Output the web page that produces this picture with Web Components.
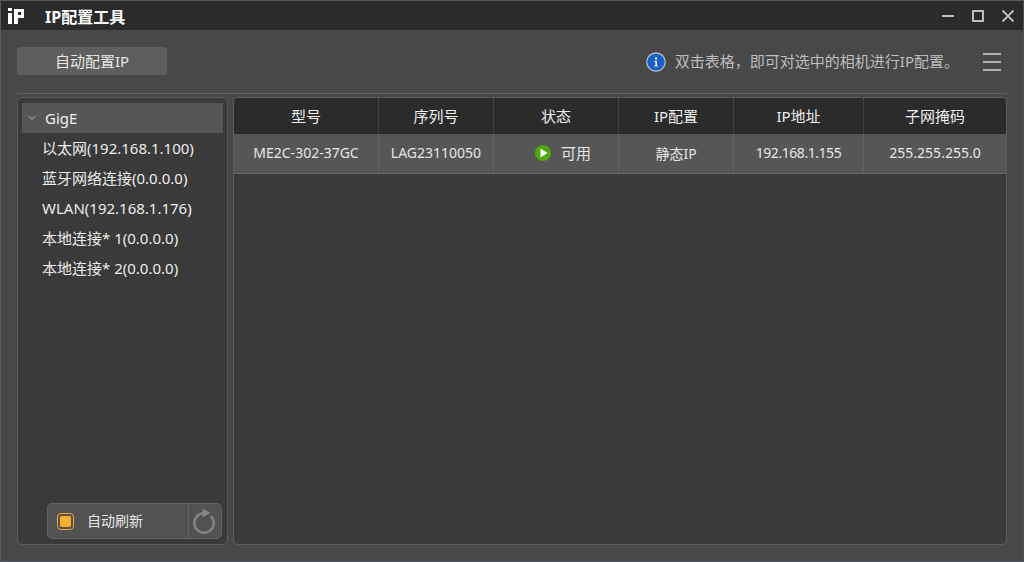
<!DOCTYPE html>
<html>
<head>
<meta charset="utf-8">
<title>IP配置工具</title>
<style>
  html, body { margin: 0; height: 100%; background: #484848; }
  body { font-family: "Noto Sans", "Noto Sans CJK SC", sans-serif; font-size: 15px; color: #e6e6e6; overflow: hidden; }
</style>
</head>
<body>
<ip-window>
  <ip-titlebar slot="title">IP配置工具</ip-titlebar>
  <ip-toolbar slot="toolbar"></ip-toolbar>
  <ip-tree slot="left"></ip-tree>
  <ip-table slot="right"></ip-table>
</ip-window>

<script>
class IpWindow extends HTMLElement {
  connectedCallback() {
    this.attachShadow({ mode: "open" });
    this.shadowRoot.innerHTML = `
      <style>
        :host { display: flex; flex-direction: column; box-sizing: border-box; width: 1024px; height: 562px; border: 1px solid #565a62; border-right-color: #4c4e52; background: #484848; }
        .body { flex: 1; display: flex; flex-direction: column; padding: 0 16px 16px; min-height: 0; }
        .rule { height: 1px; background: #5d616b; flex: none; }
        .panes { flex: 1; display: flex; gap: 5px; margin-top: 3px; min-height: 0; }
      </style>
      <slot name="title"></slot>
      <div class="body">
        <slot name="toolbar"></slot>
        <div class="rule"></div>
        <div class="panes">
          <slot name="left"></slot>
          <slot name="right"></slot>
        </div>
      </div>
    `;
  }
}

class IpTitlebar extends HTMLElement {
  connectedCallback() {
    this.attachShadow({ mode: "open" });
    this.shadowRoot.innerHTML = `
      <style>
        :host { display: flex; align-items: center; flex: none; height: 29px; background: #2b2b2b; color: #fff; font-weight: 700; font-size: 16px; }
        .logo { width: 18px; height: 16px; margin: 0 0 0 6px; flex: none; }
        .name { margin-left: 20px; flex: 1; }
        .btns { display: flex; gap: 14px; margin-right: 7px; }
        svg.b { width: 16px; height: 16px; display: block; }
      </style>
      <svg class="logo" viewBox="0 0 18 16">
        <rect x="1" y="0" width="4" height="3" fill="#fff"/>
        <rect x="1" y="5" width="4" height="11" fill="#fff"/>
        <path d="M7 1h10v9h-6v6H7z M11 4v3h3V4z" fill="#fff" fill-rule="evenodd"/>
      </svg>
      <span class="name"><slot></slot></span>
      <div class="btns">
        <svg class="b" viewBox="0 0 16 16"><path d="M2 8h12" stroke="#bdbdbd" stroke-width="2"/></svg>
        <svg class="b" viewBox="0 0 16 16"><rect x="3" y="3" width="10" height="10" fill="none" stroke="#bdbdbd" stroke-width="2"/></svg>
        <svg class="b" viewBox="0 0 16 16"><path d="M2.5 2.5l11 11M13.5 2.5l-11 11" stroke="#bdbdbd" stroke-width="1.8"/></svg>
      </div>
    `;
  }
}

class IpToolbar extends HTMLElement {
  connectedCallback() {
    this.attachShadow({ mode: "open" });
    this.shadowRoot.innerHTML = `
      <style>
        :host { display: flex; align-items: center; flex: none; height: 63px; box-sizing: border-box; }
        button { all: unset; box-sizing: border-box; width: 150px; height: 28px; margin-bottom: 1px; border-radius: 4px; background: #5e5e5e; color: #e6e6e6; text-align: center; font: 15px/28px "Noto Sans", "Noto Sans CJK SC", sans-serif; }
        .tip { margin-left: auto; display: flex; align-items: center; color: #bdbdbd; font-size: 15px; }
        .tip span { margin-top: -2px; }
        .info { width: 20px; height: 20px; margin-right: 9px; flex: none; }
        .menu { width: 20px; height: 20px; margin: 0 5px 0 23px; flex: none; }
      </style>
      <button>自动配置IP</button>
      <div class="tip">
        <svg class="info" viewBox="0 0 20 20">
          <circle cx="10" cy="10" r="9.2" fill="#1a5fc8" stroke="#b9c0cc" stroke-width="1.2"/>
          <rect x="9" y="5.5" width="2" height="2" fill="#fff"/>
          <path d="M8.4 9h2.6v4.4h1v1H8.4v-1h1V10h-1z" fill="#fff"/>
        </svg>
        <span>双击表格，即可对选中的相机进行IP配置。</span>
        <svg class="menu" viewBox="0 0 20 20"><path d="M1 2h18M1 10h18M1 18h18" stroke="#b4b4b4" stroke-width="2"/></svg>
      </div>
    `;
  }
}

class IpTree extends HTMLElement {
  connectedCallback() {
    const items = ["以太网(192.168.1.100)", "蓝牙网络连接(0.0.0.0)", "WLAN(192.168.1.176)", "本地连接* 1(0.0.0.0)", "本地连接* 2(0.0.0.0)"];
    this.attachShadow({ mode: "open" });
    this.shadowRoot.innerHTML = `
      <style>
        :host { display: flex; flex-direction: column; box-sizing: border-box; width: 211px; flex: none; padding: 5px 4px 5px 4px; background: #3a3a3a; border: 1px solid #585c64; border-radius: 5px; }
        .root { display: flex; align-items: center; height: 30px; background: #565656; color: #eee; font-size: 15px; }
        .root svg { width: 8px; height: 6px; margin: 0 9px 0 6px; }
        .item { height: 30px; line-height: 30px; padding-left: 20px; color: #ececec; white-space: nowrap; }
        ip-refresh { margin-top: auto; }
      </style>
      <div class="root">
        <svg viewBox="0 0 8 6"><path d="M1 1.2l3 3 3-3" fill="none" stroke="#9a9a9a" stroke-width="1.2"/></svg>
        GigE
      </div>
      ${items.map(t => `<div class="item">${t}</div>`).join("")}
      <ip-refresh></ip-refresh>
    `;
  }
}

class IpRefresh extends HTMLElement {
  connectedCallback() {
    this.attachShadow({ mode: "open" });
    this.shadowRoot.innerHTML = `
      <style>
        :host { display: flex; align-self: flex-end; box-sizing: border-box; width: 175px; height: 36px; margin-right: 1px; background: #525252; border: 1px solid #5f6269; border-radius: 5px; }
        .check { display: flex; align-items: center; flex: 1; padding-left: 9px; font-size: 14px; color: #e6e6e6; }
        .check span { margin-top: -2px; }
        .box { box-sizing: border-box; width: 17px; height: 17px; border: 1px solid #f0a92e; border-radius: 4px; padding: 2px; margin-right: 13px; }
        .box i { display: block; width: 100%; height: 100%; background: #fbb02c; border-radius: 2px; }
        .spin { width: 32px; border-left: 1px solid #626262; display: flex; align-items: center; justify-content: center; }
        .spin svg { width: 24px; height: 26px; }
      </style>
      <div class="check"><div class="box"><i></i></div><span>自动刷新</span></div>
      <div class="spin">
        <svg viewBox="0 0 24 26">
          <path d="M10.5 5.3A9.7 9.7 0 1 0 17.9 8.1" fill="none" stroke="#858585" stroke-width="2.4"/>
          <path d="M9.5 .5L17.5 5 9.5 9.5z" fill="#858585"/>
        </svg>
      </div>
    `;
  }
}

class IpTable extends HTMLElement {
  connectedCallback() {
    const cols = "145px 115px 125px 115px 130px 1fr";
    const heads = ["型号", "序列号", "状态", "IP配置", "IP地址", "子网掩码"];
    this.attachShadow({ mode: "open" });
    this.shadowRoot.innerHTML = `
      <style>
        :host { display: block; flex: 1; box-sizing: border-box; background: #3a3a3a; border: 1px solid #585c64; border-radius: 5px; overflow: hidden; }
        .row { display: grid; grid-template-columns: ${cols}; }
        .head { height: 36px; background: #2b2b2b; color: #eee; font-size: 15px; }
        .head div { display: flex; align-items: center; justify-content: center; border-right: 1px dotted #5a5a5a; padding-bottom: 2px; box-sizing: border-box; }
        .head div:last-child { border-right: 0; }
        .body { height: 40px; box-sizing: border-box; background: #565656; border-bottom: 1px solid #666; color: #e6e6e6; font-size: 14px; }
        .body div { display: flex; align-items: center; justify-content: center; border-right: 1px solid #636363; white-space: nowrap; padding-bottom: 2px; }
        .body div:last-child { border-right: 0; }
        .body svg { width: 16px; height: 16px; margin: 0 10px 0 0; }
        .body .cn { font-size: 15px; padding-left: 14px; }
        .body .tight { letter-spacing: -0.45px; }
      </style>
      <div class="row head">${heads.map(h => `<div>${h}</div>`).join("")}</div>
      <div class="row body">
        <div>ME2C-302-37GC</div>
        <div>LAG23110050</div>
        <div class="cn"><svg viewBox="0 0 16 16"><circle cx="8" cy="8" r="8" fill="#4fa80e"/><path d="M5.5 3.5l7 4.5-7 4.5z" fill="#fff"/></svg>可用</div>
        <div>静态IP</div>
        <div class="tight">192.168.1.155</div>
        <div>255.255.255.0</div>
      </div>
    `;
  }
}

customElements.define("ip-window", IpWindow);
customElements.define("ip-titlebar", IpTitlebar);
customElements.define("ip-toolbar", IpToolbar);
customElements.define("ip-tree", IpTree);
customElements.define("ip-refresh", IpRefresh);
customElements.define("ip-table", IpTable);
</script>
</body>
</html>
